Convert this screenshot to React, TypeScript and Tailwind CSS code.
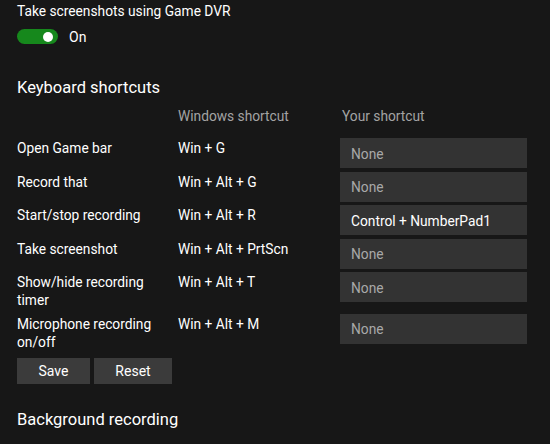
import * as React from "react";

interface Shortcut {
  label: string;
  windows: string;
  mine: string;
}

const SHORTCUTS: Shortcut[] = [
  { label: "Open Game bar", windows: "Win + G", mine: "None" },
  { label: "Record that", windows: "Win + Alt + G", mine: "None" },
  { label: "Start/stop recording", windows: "Win + Alt + R", mine: "Control + NumberPad1" },
  { label: "Take screenshot", windows: "Win + Alt + PrtScn", mine: "None" },
  { label: "Show/hide recording timer", windows: "Win + Alt + T", mine: "None" },
  { label: "Microphone recording on/off", windows: "Win + Alt + M", mine: "None" },
];

function Toggle({ on }: { on: boolean }) {
  return (
    <div className="flex items-center gap-[11px]">
      <div className="relative h-[15px] w-[41px] rounded-full bg-[#16881c]">
        <span className="absolute left-[26px] top-[2.5px] h-[10px] w-[10px] rounded-full bg-white" />
      </div>
      <span className="text-[14px] leading-5 text-white">{on ? "On" : "Off"}</span>
    </div>
  );
}

export default function App() {
  return (
    <div
      className="min-h-[444px] w-[550px] overflow-hidden bg-[#171717] px-[17px] pt-[1px] text-white"
      style={{ fontFamily: 'Roboto, "Open Sans", sans-serif' }}
    >
      <p className="text-[13.75px] leading-5">Take screenshots using Game DVR</p>
      <div className="mt-[7px] flex h-[17px] items-center">
        <Toggle on />
      </div>

      <h2 className="mt-[31px] text-[16.5px] leading-6">Keyboard shortcuts</h2>

      <div className="mt-[6px] grid grid-cols-[161px_162px_187px] text-[13.75px] leading-5 text-[#a3a3a3]">
        <span />
        <span>Windows shortcut</span>
        <span className="pl-[2px]">Your shortcut</span>
      </div>

      <div className="mt-[12px] grid grid-cols-[161px_162px_187px] gap-y-[3.5px] text-[13.75px] leading-[18px]">
        {SHORTCUTS.map((s) => (
          <React.Fragment key={s.label}>
            <span className="py-[1px] pr-3">{s.label}</span>
            <span className="py-[1px]">{s.windows}</span>
            <div
              className={
                s.mine === "None"
                  ? "flex h-[30px] items-center bg-[#333333] pl-[11px] pt-[1px] text-[#a8a8a8]"
                  : "flex h-[30px] items-center bg-[#333333] pl-[11px] pt-[1px] text-white"
              }
            >
              {s.mine}
            </div>
          </React.Fragment>
        ))}
      </div>

      <div className="mt-[6.5px] flex gap-[4px] text-[14px]">
        <button className="h-[26px] w-[73px] bg-[#3b3b3b] text-white">Save</button>
        <button className="h-[26px] w-[78px] bg-[#3b3b3b] text-white">Reset</button>
      </div>

      <h2 className="mt-[24px] text-[16.5px] leading-6">Background recording</h2>
    </div>
  );
}
